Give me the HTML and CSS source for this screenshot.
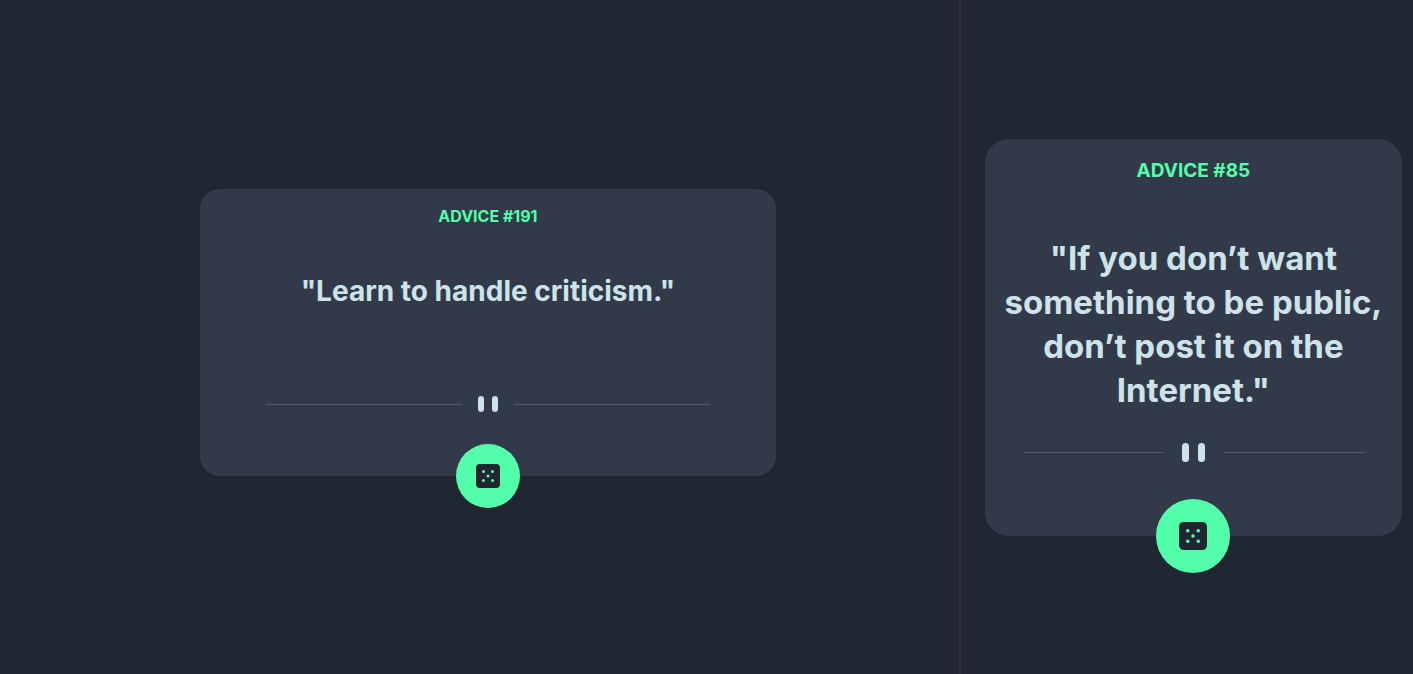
FILE: index.html
```html
<!DOCTYPE html>
<html lang="en">
<head>
<meta charset="utf-8">
<meta name="viewport" content="width=device-width, initial-scale=1">
<title>Advice generator</title>
<link rel="stylesheet" href="styles.css">
</head>
<body>
<main class="views">
  <section class="view view-wide">
    <article class="card">
      <h2 class="label">ADVICE #191</h2>
      <p class="quote">"Learn to handle criticism."</p>
      <div class="divider">
        <span class="line"></span>
        <svg class="bars" viewBox="0 0 20 16" aria-hidden="true"><rect width="6" height="16" rx="3"/><rect x="14" width="6" height="16" rx="3"/></svg>
        <span class="line"></span>
      </div>
      <button class="dice" type="button" aria-label="New advice">
        <svg viewBox="0 0 24 24" aria-hidden="true"><rect class="die" width="24" height="24" rx="4"/><g class="pips"><circle cx="7.5" cy="7.5" r="1.5"/><circle cx="16.5" cy="7.5" r="1.5"/><circle cx="12" cy="12" r="1.5"/><circle cx="7.5" cy="16.5" r="1.5"/><circle cx="16.5" cy="16.5" r="1.5"/></g></svg>
      </button>
    </article>
  </section>
  <section class="view view-narrow">
    <article class="card">
      <h2 class="label">ADVICE #85</h2>
      <p class="quote">"If you don’t want something to be public, don’t post it on the Internet."</p>
      <div class="divider">
        <span class="line"></span>
        <svg class="bars" viewBox="0 0 24 19" aria-hidden="true"><rect width="7" height="19" rx="3.5"/><rect x="16" width="7" height="19" rx="3.5"/></svg>
        <span class="line"></span>
      </div>
      <button class="dice" type="button" aria-label="New advice">
        <svg viewBox="0 0 24 24" aria-hidden="true"><rect class="die" width="24" height="24" rx="4"/><g class="pips"><circle cx="7.5" cy="7.5" r="1.5"/><circle cx="16.5" cy="7.5" r="1.5"/><circle cx="12" cy="12" r="1.5"/><circle cx="7.5" cy="16.5" r="1.5"/><circle cx="16.5" cy="16.5" r="1.5"/></g></svg>
      </button>
    </article>
  </section>
</main>
</body>
</html>
```
FILE: styles.css
```css
* { box-sizing: border-box; }

body {
  margin: 0;
  background: #202632;
  color: #cee3e9;
  font-family: Inter, "Open Sans", sans-serif;
}

.views {
  display: grid;
  grid-template-columns: 19fr 9fr;
  min-height: 100vh;
}

.view {
  display: flex;
  align-items: center;
  justify-content: center;
}

.view-wide { padding: 0 0 9px 17px; }

.view-narrow {
  padding: 1px 11px 0 24px;
  border-left: 2px solid #303030;
}

.card {
  position: relative;
  display: flex;
  flex-direction: column;
  align-items: center;
  width: 100%;
  background: #323a49;
  text-align: center;
}

.label {
  margin: 0;
  color: #53ffaa;
  font-weight: 700;
}

.quote {
  margin: 0;
  font-weight: 700;
}

.divider {
  display: flex;
  align-items: center;
  width: 100%;
}

.line {
  flex: 1;
  height: 1px;
  background: #4f5d74;
}

.bars { fill: #cee3e9; }

.dice {
  position: absolute;
  bottom: 0;
  left: 50%;
  display: grid;
  place-items: center;
  padding: 0;
  border: 0;
  border-radius: 50%;
  background: #53ffaa;
  transform: translate(-50%, 50%);
  cursor: pointer;
}

.die { fill: #202632; }
.pips { fill: #53ffaa; }

.view-wide .card {
  max-width: 576px;
  padding: 16px 66px 64px;
  border-radius: 20px;
}

.view-wide .label { font-size: 16px; line-height: 22px; }

.view-wide .quote {
  min-height: 123px;
  margin-top: 46px;
  font-size: 28px;
  line-height: 36px;
}

.view-wide .divider { gap: 16px; }
.view-wide .bars { width: 20px; height: 16px; }
.view-wide .dice { width: 64px; height: 64px; }
.view-wide .dice svg { width: 24px; height: 24px; }

.view-narrow .card {
  padding: 19px 16px 74px;
  border-radius: 24px;
}

.view-narrow .label { font-size: 19px; line-height: 26px; }

.view-narrow .quote {
  margin-top: 52px;
  font-size: 33px;
  line-height: 44px;
}

.view-narrow .divider {
  gap: 18px;
  margin-top: 31px;
  padding: 0 21px 0 22px;
}

.view-narrow .bars { width: 24px; height: 19px; }
.view-narrow .dice { width: 74px; height: 74px; }
.view-narrow .dice svg { width: 28px; height: 28px; }
```
